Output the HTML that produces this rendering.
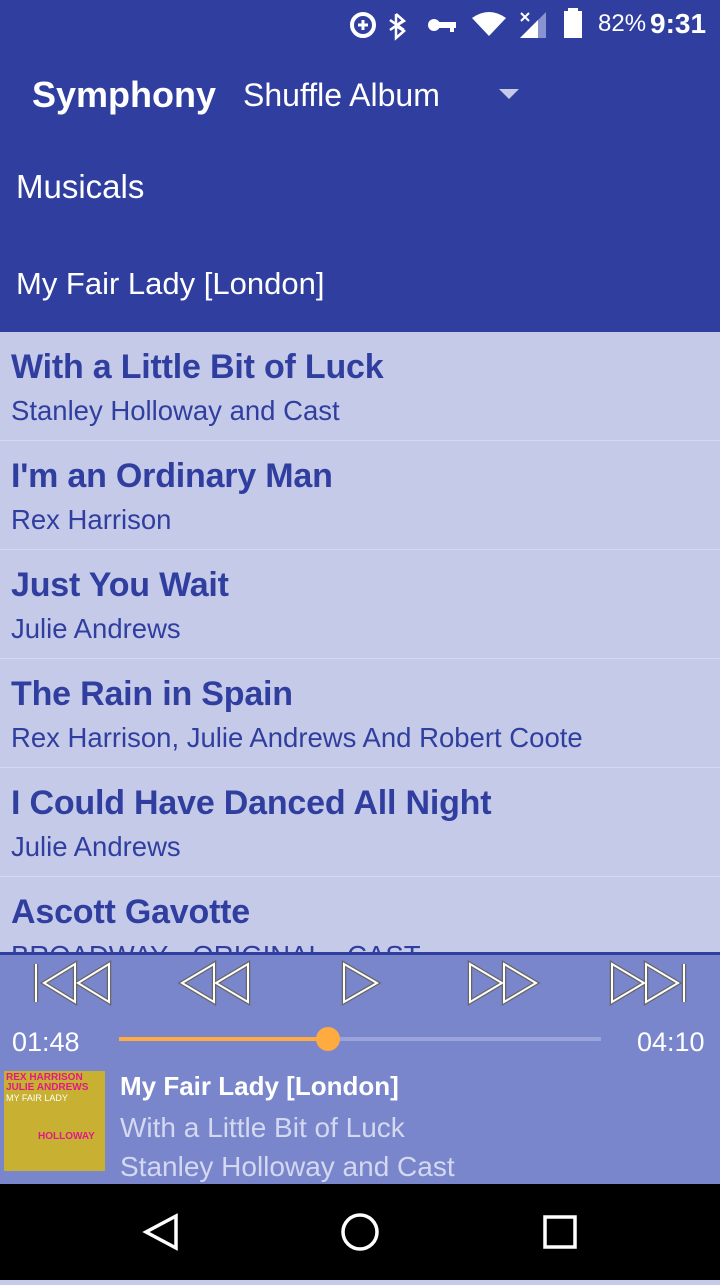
<!DOCTYPE html>
<html><head><meta charset="utf-8"><style>
*{margin:0;padding:0;box-sizing:border-box}
body{width:720px;height:1280px;overflow:hidden;font-family:"Liberation Sans",sans-serif;background:#C5CAE9;position:relative}
.hdr{position:absolute;left:0;top:0;width:720px;height:332px;background:#303F9F;color:#fff}
.t{position:absolute;white-space:nowrap}
.row{position:absolute;left:0;width:720px;height:109px;border-bottom:1px solid #d6d9ef;color:#303F9F}
.row .a{position:absolute;left:11px;top:16px;font-size:34px;font-weight:bold;white-space:nowrap;letter-spacing:-0.2px}
.row .b{position:absolute;left:11px;top:63px;font-size:27.5px;white-space:nowrap}
.pl{position:absolute;left:0;top:952px;width:720px;height:232px;background:#7986CB;border-top:3px solid #303F9F}
.nav{position:absolute;left:0;top:1184px;width:720px;height:96px;background:#000}
</style></head><body>
<div class="hdr">
<svg style="position:absolute;left:348px;top:8px" width="200" height="34" viewBox="0 0 200 34">
<circle cx="15" cy="17" r="11" fill="none" stroke="#fff" stroke-width="4"/><path d="M10 17h10M15 12v10" stroke="#fff" stroke-width="3"/>
<path d="M48 6l8 7-8 5 8 5-8 7V6M42 12l14 10M42 22l14-10" stroke="#fff" stroke-width="2.5" fill="none"/>
<circle cx="86" cy="17" r="6" fill="#fff"/><rect x="88" y="14" width="20" height="6" fill="#fff"/><rect x="102" y="18" width="4" height="6" fill="#fff"/>
<path d="M124 10q17-12 34 0l-17 18z" fill="#fff"/>
<path d="M172 30l26-26v26z" fill="#8a93d0"/><path d="M172 30l18-18v18z" fill="#fff"/><path d="M173 5l8 8M181 5l-8 8" stroke="#fff" stroke-width="2"/>
</svg>
<div style="position:absolute;left:564px;top:11px;width:18px;height:27px;background:#fff"></div>
<div style="position:absolute;left:568px;top:8px;width:10px;height:4px;background:#fff"></div>
<div class="t" style="left:598px;top:10px;font-size:24px">82%</div>
<div class="t" style="left:650px;top:8px;font-size:28px;font-weight:bold">9:31</div>
<div class="t" style="left:32px;top:74px;font-size:36px;font-weight:bold">Symphony</div>
<div class="t" style="left:243px;top:77px;font-size:32px">Shuffle Album</div>
<div style="position:absolute;left:499px;top:89px;border-left:10px solid transparent;border-right:10px solid transparent;border-top:10px solid #c5cae9"></div>
<div class="t" style="left:16px;top:168px;font-size:33px">Musicals</div>
<div class="t" style="left:16px;top:266px;font-size:31px">My Fair Lady [London]</div>
</div>
<div class="row" style="top:332px"><div class="a">With a Little Bit of Luck</div><div class="b">Stanley Holloway and Cast</div></div>
<div class="row" style="top:441px"><div class="a">I'm an Ordinary Man</div><div class="b">Rex Harrison</div></div>
<div class="row" style="top:550px"><div class="a">Just You Wait</div><div class="b">Julie Andrews</div></div>
<div class="row" style="top:659px"><div class="a">The Rain in Spain</div><div class="b">Rex Harrison, Julie Andrews And Robert Coote</div></div>
<div class="row" style="top:768px"><div class="a">I Could Have Danced All Night</div><div class="b">Julie Andrews</div></div>
<div class="row" style="top:877px"><div class="a">Ascott Gavotte</div><div class="b">BROADWAY - ORIGINAL - CAST</div></div>
<div class="pl">
<svg style="position:absolute;left:0;top:0" width="720" height="60" viewBox="0 0 720 60" fill="none">
<defs><g id="ic">
<path d="M36 9v38M44 28l31-19v38zM78 28l31-19v38z"/>
<path d="M182 28l32-19v38zM216 28l32-19v38z"/>
<path d="M344 9l33 19-33 19z"/>
<path d="M470 9l32 19-32 19zM504 9l32 19-32 19z"/>
<path d="M612 9l32 19-32 19zM646 9l32 19-32 19zM684 9v38"/>
</g></defs>
<use href="#ic" stroke="#666" stroke-width="4.5"/>
<use href="#ic" stroke="#fff" stroke-width="2"/>
</svg>
<div class="t" style="left:12px;top:72px;font-size:27px;color:#fff">01:48</div>
<div class="t" style="left:637px;top:72px;font-size:27px;color:#fff">04:10</div>
<div style="position:absolute;left:119px;top:82px;width:482px;height:4px;background:#9aa3da"></div>
<div style="position:absolute;left:119px;top:82px;width:209px;height:4px;background:#FFAB40"></div>
<div style="position:absolute;left:316px;top:72px;width:24px;height:24px;border-radius:50%;background:#FFAB40"></div>
<div style="position:absolute;left:4px;top:116px;width:101px;height:100px;background:#c8b032">
<div style="color:#e0198a;font-size:10px;font-weight:bold;padding:2px 2px 0;line-height:10px">REX HARRISON<br>JULIE ANDREWS</div>
<div style="color:#fff;font-size:9px;padding:0 2px">MY FAIR LADY</div>
<div style="color:#e0198a;font-size:10px;font-weight:bold;position:absolute;left:34px;top:60px">HOLLOWAY</div></div>
<div class="t" style="left:120px;top:116px;font-size:26px;font-weight:bold;color:#fff">My Fair Lady [London]</div>
<div class="t" style="left:120px;top:157px;font-size:28px;color:#d4d8f0">With a Little Bit of Luck</div>
<div class="t" style="left:120px;top:196px;font-size:28px;color:#d4d8f0">Stanley Holloway and Cast</div>
</div>
<div class="nav">
<svg width="720" height="96" viewBox="0 0 720 96" fill="none" stroke="#fff" stroke-width="3.5">
<path d="M176 32v32l-30-16z"/><circle cx="360" cy="48" r="17"/><rect x="545" y="33" width="30" height="30"/>
</svg></div>
</body></html>
